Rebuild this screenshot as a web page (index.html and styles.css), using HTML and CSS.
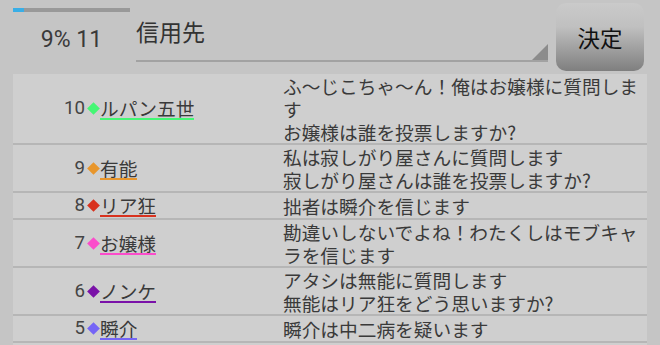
FILE: index.html
```html
<!DOCTYPE html>
<html lang="ja">
	<head>
		<title>投票</title>
		<meta charset="utf-8" />
		<link rel="stylesheet" href="styles.css">
	</head>
	<body>
		<div class="head">
			<div class="stat">
				<div class="bar"><div class="fill" style="width: 9%"></div></div>
				<div class="count">9% 11</div>
			</div>
			<div class="spinner">信用先</div>
			<div class="ok">決定</div>
		</div>
		<div class="list">
			<div class="row">
				<div class="who"><span class="num">10</span><span class="dia c-green"></span><span class="name c-green">ルパン五世</span></div>
				<div class="msg">ふ〜じこちゃ〜ん！俺はお嬢様に質問します<br />お嬢様は誰を投票しますか?</div>
			</div>
			<div class="row">
				<div class="who"><span class="num">9</span><span class="dia c-orange"></span><span class="name c-orange">有能</span></div>
				<div class="msg">私は寂しがり屋さんに質問します<br />寂しがり屋さんは誰を投票しますか?</div>
			</div>
			<div class="row">
				<div class="who"><span class="num">8</span><span class="dia c-red"></span><span class="name c-red">リア狂</span></div>
				<div class="msg">拙者は瞬介を信じます</div>
			</div>
			<div class="row">
				<div class="who"><span class="num">7</span><span class="dia c-pink"></span><span class="name c-pink">お嬢様</span></div>
				<div class="msg">勘違いしないでよね！わたくしはモブキャラを信じます</div>
			</div>
			<div class="row">
				<div class="who"><span class="num">6</span><span class="dia c-purple"></span><span class="name c-purple">ノンケ</span></div>
				<div class="msg">アタシは無能に質問します<br />無能はリア狂をどう思いますか?</div>
			</div>
			<div class="row">
				<div class="who"><span class="num">5</span><span class="dia c-blue"></span><span class="name c-blue">瞬介</span></div>
				<div class="msg">瞬介は中二病を疑います</div>
			</div>
		</div>
	</body>
</html>
```

FILE: styles.css
```css
body {margin: 0; background: #c5c5c5; color: #3a3a3a; font-family: Roboto, "Noto Sans CJK JP", sans-serif; overflow: hidden; height: 345px;}
.head {display: flex; height: 74px; padding-left: 13px; box-sizing: border-box;}
.stat {width: 117px; display: flex; flex-direction: column;}
.bar {height: 4px; margin-top: 8px; background: #999999;}
.fill {height: 100%; background: #39aee6;}
.count {text-align: center; font-size: 23px; line-height: 27px; margin-top: 14px; color: #3a3a3a;}
.spinner {position: relative; width: 412px; height: 62px; margin-left: 6px; border-bottom: 2px solid #a2a2a2; font-size: 23px; line-height: 30px; padding-top: 19px; box-sizing: border-box; color: #333;}
.spinner::after {content: ""; position: absolute; right: 0; bottom: 0; border-style: solid; border-width: 0 0 16px 16px; border-color: transparent transparent #8c8c8c transparent;}
.ok {width: 88px; height: 68px; margin: 3px 0 0 8px; border-radius: 10px; background: linear-gradient(#cacaca, #c0c0c0 35%, #7f7f7f); display: flex; align-items: center; justify-content: center; font-size: 22.5px; color: #111; font-family: "Noto Sans CJK JP", sans-serif;}
.list {margin: 0 13px; padding-bottom: 20px; background: #cfcfcf; width: 634px;}
.row {display: flex; align-items: center; border-bottom: 2px solid #b6b6b6; min-height: 25px; font-size: 18.7px; line-height: 23px;}
.who {width: 270px; display: flex; align-items: center;}
.num {width: 72px; text-align: right; color: #444; font-family: Roboto, sans-serif;}
.dia {width: 9px; height: 9px; margin: 0 2px 0 4px; transform: rotate(45deg); background: currentColor;}
.name {border-bottom: 2px solid currentColor; line-height: 21px; font-family: "Noto Sans CJK JP", sans-serif;}
.name.c-green, .name.c-orange, .name.c-red, .name.c-pink, .name.c-purple, .name.c-blue {color: #3a3a3a;}
.c-green {color: #44f774; border-color: #44f774;}
.c-orange {color: #e8962c; border-color: #e8962c;}
.c-red {color: #d8321e; border-color: #d8321e;}
.c-pink {color: #fb4ccb; border-color: #fb4ccb;}
.c-purple {color: #7a12a8; border-color: #7a12a8;}
.c-blue {color: #7565f6; border-color: #7565f6;}
.msg {flex: 1; font-family: "Noto Sans CJK JP", sans-serif; color: #3a3a3a;}
```
